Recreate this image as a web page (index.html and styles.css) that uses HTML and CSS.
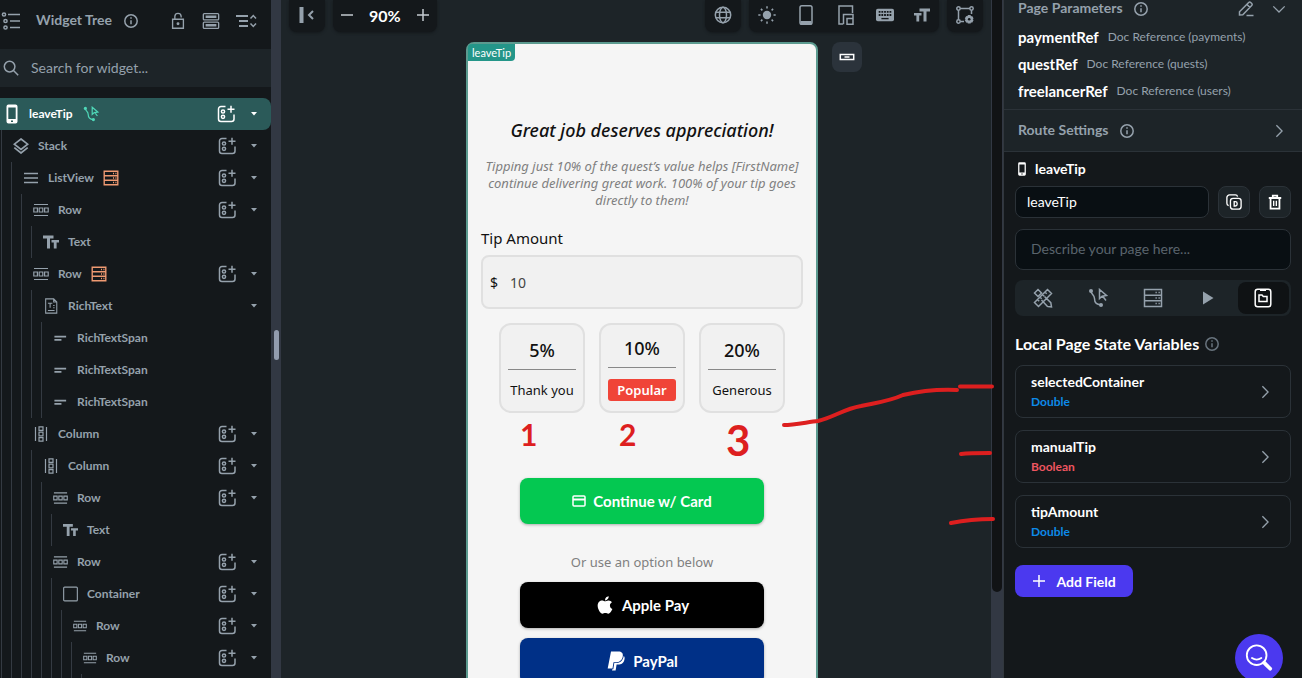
FILE: index.html
```
<!DOCTYPE html>
<html lang="en">
<head>
  <meta charset="UTF-8">
  <title>leaveTip - Widget Tree</title>
  <link rel="stylesheet" href="styles.css">
</head>
<body>
  <svg class="defs" aria-hidden="true">
    <symbol id="info" viewBox="0 0 16 16"><circle cx="8" cy="8" r="6.2"/><path d="M8 7.3v4M8 4.3v1.5"/></symbol>
    <symbol id="list" viewBox="0 0 20 20"><circle cx="3" cy="3.5" r="1.6"/><circle cx="4.5" cy="10" r="1.6"/><circle cx="4.5" cy="16.5" r="1.6"/><path d="M7 3.5h12M9 10h10M9 16.5h10"/></symbol>
    <symbol id="lock" viewBox="0 0 16 20"><path d="M2 8h12v10H2zM4.500 8V5a3.500 3.500 0 0 1 7 0v1"/><circle class="solid" cx="8" cy="13" r="1.600"/></symbol>
    <symbol id="panels" viewBox="0 0 20 20"><rect x="1.500" y="1.800" width="17" height="7" rx="1"/><rect x="1.500" y="11.200" width="17" height="7" rx="1"/><path class="thick" d="M4 5.300h12M4 14.700h12"/></symbol>
    <symbol id="collapse" viewBox="0 0 22 16"><path class="chev" d="M1 3h12M4 8h9M4 13h9"/><path d="M15.500 5.500 18.300 2.500l2.700 3M15.500 10.500l2.800 3 2.700-3"/></symbol>
    <symbol id="search" viewBox="0 0 16 16"><circle cx="6.600" cy="6.600" r="5.300"/><path d="m10.500 10.500 4.700 4.700"/></symbol>
    <symbol id="phone" viewBox="0 0 12 20"><path class="solid" fill-rule="evenodd" d="M2.500.5h7a2 2 0 0 1 2 2v15a2 2 0 0 1-2 2h-7a2 2 0 0 1-2-2v-15a2 2 0 0 1 2-2zM2.300 3.500v11.500h7.400V3.500zM5 16.600v1.400h2v-1.400z"/></symbol>
    <symbol id="action" viewBox="0 0 20 20"><circle class="solid" cx="3" cy="3" r="2"/><circle class="solid" cx="13" cy="17" r="2"/><path d="M3 3c0 3.500 3.500 3.500 3.500 7.500 0 5 2.500 6 6.500 6.500M11.500 1.500v9l2.600-2.300 4.400-.7zM14.500 8l3.500 4.500"/></symbol>
    <symbol id="db" viewBox="0 0 20 20"><path d="M1.500 1.500h17v17h-17zM1.500 7.200h17M1.500 12.800h17"/><path d="M12.500 4.400h1.300M15.500 4.400h1.300M12.500 10h1.300M15.500 10h1.300M12.500 15.600h1.300M15.500 15.600h1.300" /></symbol>
    <symbol id="add" viewBox="0 0 18 18"><path d="M8.500 1.500H4A2.500 2.500 0 0 0 1.500 4v10A2.500 2.500 0 0 0 4 16.500h10.500a2.500 2.500 0 0 0 2.500-2.500V9.500M14 .8v7M10.500 4.300h7"/><circle cx="6" cy="6.500" r="1.600"/><circle cx="6" cy="11.800" r="1.600"/></symbol>
    <symbol id="caret" viewBox="0 0 8 6"><path class="solid" d="M1 1h6L4 4.500z"/></symbol>
    <symbol id="stack" viewBox="0 0 16 16"><path class="mid" d="m8 1 6.700 5.200L8 11.400 1.300 6.200zM1.300 9.700 8 15l6.700-5.300"/></symbol>
    <symbol id="lines" viewBox="0 0 16 16"><path class="mid" d="M1 3.500h14M1 8h14M1 12.500h14"/></symbol>
    <symbol id="row" viewBox="0 0 16 16"><path d="M1 2.500h14M1 13.500h14M.8 6h3.600v4H.8zM6.200 6h3.600v4H6.200zM11.600 6h3.600v4h-3.600z"/></symbol>
    <symbol id="column" viewBox="0 0 16 16"><path d="M2.500 1v14M13.500 1v14M6 .8h4v3.600H6zM6 6.200h4v3.600H6zM6 11.600h4v3.600H6z"/></symbol>
    <symbol id="text" viewBox="0 0 16 16"><path class="solid" d="M0 1.500h10.500v3H7v10H4v-10H0zM8.500 6H16v2.600h-2.400v5.900h-2.800V8.600H8.500z"/></symbol>
    <symbol id="textsize" viewBox="0 0 16 16"><path class="solid" d="M5.500 1.500H16v3h-3.500v10h-3v-10h-4zM0 6h7.500v2.600H5.200v5.900H2.400V8.600H0z"/></symbol>
    <symbol id="doc" viewBox="0 0 16 18"><path d="M2 1h9l3.500 3.500V17H2zM4.500 6h5M7 6v5M10.500 8.500H12M10.500 11H12M4.500 14H12M11 1v3.500h3.500"/></symbol>
    <symbol id="span" viewBox="0 0 16 16"><path class="mid" d="M1.500 6.500H14M1.500 10H9"/></symbol>
    <symbol id="box" viewBox="0 0 16 16"><rect x=".7" y=".7" width="14.600" height="14.600" rx="1"/></symbol>
    <symbol id="right" viewBox="0 0 16 16"><path d="m5 1.500 6.500 6.500L5 14.500"/></symbol>
    <symbol id="down" viewBox="0 0 16 16"><path d="m1.500 5 6.500 6.500L14.500 5"/></symbol>
    <symbol id="plus" viewBox="0 0 14 14"><path d="M7 1v12M1 7h12"/></symbol>
    <symbol id="minus" viewBox="0 0 14 14"><path d="M1 7h12"/></symbol>
    <symbol id="back" viewBox="0 0 16 16"><path class="bar" d="M2.500 0v16"/><path class="chev" d="m14 4-4 4 4 4"/></symbol>
    <symbol id="globe" viewBox="0 0 18 18"><circle cx="9" cy="9" r="7.700"/><ellipse cx="9" cy="9" rx="3.500" ry="7.700"/><path d="M1.900 6.300h14.200M1.900 11.700h14.200"/></symbol>
    <symbol id="sun" viewBox="0 0 18 18"><circle class="solid" cx="9" cy="9" r="4.200"/><path d="M9 .3v2.200M9 15.500v2.200M.3 9h2.200M15.500 9h2.200M2.900 2.900l1.500 1.500M13.600 13.600l1.500 1.500M2.900 15.100l1.500-1.500M13.600 4.400l1.500-1.500"/></symbol>
    <symbol id="device" viewBox="0 0 14 20"><rect x="1" y=".8" width="12" height="18.400" rx="1.800"/><path class="thick" d="M1.500 17.500h11"/></symbol>
    <symbol id="responsive" viewBox="0 0 16 20"><path d="M5 19H1V1h13.500v7M5.500 19.200V9.500H15v9.700M9 13.500h6v5.700H9z"/></symbol>
    <symbol id="keyboard" viewBox="0 0 20 14"><rect class="solid" width="20" height="14" rx="2"/><path class="keys" d="M3 3.500h14M3 7h14"/><path class="keybar" d="M6 11h8"/></symbol>
    <symbol id="nodes" viewBox="0 0 18 18"><circle cx="2.500" cy="2.500" r="1.700"/><circle cx="15.500" cy="2.500" r="1.700"/><circle cx="2.500" cy="15.500" r="1.700"/><path d="M4.200 2.500h9.600M2.500 4.200v9.600M4.200 15.500H8M15.500 4.200V8"/><circle class="solid" cx="13.200" cy="13.300" r="3.600"/><path class="thick" d="M13.200 9v8.600M9.500 11.200l7.400 4.200M9.500 15.400l7.400-4.200"/><circle class="hole" cx="13.200" cy="13.300" r="1.300"/></symbol>
    <symbol id="hbar" viewBox="0 0 16 8"><path d="M1.300 1.500h13.400v5H1.300z"/><path d="M5.500 4h5"/></symbol>
    <symbol id="pencil" viewBox="0 0 16 16"><path d="M1.500 14v-3.300L10.700 1.500q1-1 2 0l1 1q1 1 0 2L4.800 13.800zM8.500 14.500h7M9 3.500l3 3"/></symbol>
    <symbol id="copy" viewBox="0 0 18 18"><rect x="5" y="5" width="12" height="12" rx="3"/><path d="M3 13a2.500 2.500 0 0 1-2-2.500V4a3 3 0 0 1 3-3h6.500A2.500 2.500 0 0 1 13 3M9.200 8.500v5h1.300a2 2 0 0 0 2-2v-1a2 2 0 0 0-2-2z"/></symbol>
    <symbol id="trash" viewBox="0 0 16 18"><path class="chev" d="M1 4.500h14M5.500 4V1.800h5V4M3 5v11.500h10V5"/><path d="M6.500 7.500v6M9.500 7.500v6"/></symbol>
    <symbol id="design" viewBox="0 0 20 20"><path d="m1.500 5 3.500-3.500L8.500 5 5 8.500zM14.500 18.500l4 .5-.7-4.300L11.500 8.500M8.500 12l6 6.500M14.500 1.500l4 4-13 13-4-4zM12 4l1.700 1.700M9.500 6.500l1.700 1.700M7 9l1.700 1.700M4.500 11.500l1.700 1.700"/></symbol>
    <symbol id="play" viewBox="0 0 12 14"><path class="solid" d="M1 .5v13L11.500 7z"/></symbol>
    <symbol id="state" viewBox="0 0 18 20"><rect x="1.200" y="1.200" width="15.600" height="17.600" rx="2.500"/><path class="chev" d="M6 2h6"/><path d="M5 7h3l1.300 1.500H13V13.500H5z"/></symbol>
    <symbol id="card" viewBox="0 0 14 12"><rect x="1" y="1" width="12" height="10" rx="1"/><path class="chev" d="M1 4.500h12"/></symbol>
    <symbol id="apple" viewBox="0 0 384 512"><path class="solid" d="M318.700 268.700c-.2-36.700 16.400-64.400 50-84.800-18.800-26.900-47.200-41.700-84.700-44.600-35.500-2.800-74.300 20.700-88.500 20.700-15 0-49.400-19.700-76.400-19.700C63.300 141.200 4 184.800 4 273.500q0 39.300 14.400 81.200c12.800 36.700 59 126.700 107.200 125.200 25.200-.6 43-17.900 75.800-17.900 31.800 0 48.300 17.900 76.400 17.900 48.600-.7 90.400-82.500 102.600-119.300-65.200-30.700-61.700-90-61.700-91.900zm-56.600-164.200c27.300-32.400 24.800-61.900 24-72.500-24.100 1.400-52 16.400-67.900 34.900-17.500 19.800-27.800 44.300-25.600 71.900 26.100 2 49.900-11.400 69.500-34.300z"/></symbol>
    <symbol id="paypal" viewBox="0 0 18 20"><path class="solid" d="M4 .5h7.500c3 0 4.800 1.600 4.300 4.700-.7 4.300-3.500 6-7 6H6.500l-1 6.300H.7z"/><path class="solid" d="M16.700 5c1.300 1 1 2.600.7 3.800-.8 3.500-3.200 4.800-6.200 4.800H9.600l-1 6H5l.3-1.300h1l1-6.300h2c4 0 6.600-2.300 7.400-7z"/></symbol>
  </svg>

  <div class="app">
    <aside class="left">
      <header class="left-head">
        <svg class="i20"><use href="#list"/></svg>
        <h2>Widget Tree</h2>
        <svg class="i16"><use href="#info"/></svg>
        <div class="head-tools">
          <button aria-label="Lock"><svg class="i18"><use href="#lock"/></svg></button>
          <button aria-label="Panels"><svg class="i18"><use href="#panels"/></svg></button>
          <button aria-label="Collapse"><svg class="i22"><use href="#collapse"/></svg></button>
        </div>
      </header>
      <label class="search">
        <svg class="i16"><use href="#search"/></svg>
        <input type="text" placeholder="Search for widget..." aria-label="Search for widget">
      </label>

      <div class="tree">
        <div class="node selected"><svg class="tall"><use href="#phone"/></svg><span>leaveTip</span><svg class="i16 teal"><use href="#action"/></svg><button class="add" aria-label="Add"><svg><use href="#add"/></svg></button><button class="caret" aria-label="Toggle"><svg><use href="#caret"/></svg></button></div>
        <ul>
          <li>
            <div class="node"><svg class="type"><use href="#stack"/></svg><span>Stack</span><button class="add" aria-label="Add"><svg><use href="#add"/></svg></button><button class="caret" aria-label="Toggle"><svg><use href="#caret"/></svg></button></div>
            <ul>
              <li>
                <div class="node"><svg class="type"><use href="#lines"/></svg><span>ListView</span><svg class="i16 orange"><use href="#db"/></svg><button class="add" aria-label="Add"><svg><use href="#add"/></svg></button><button class="caret" aria-label="Toggle"><svg><use href="#caret"/></svg></button></div>
                <ul>
                  <li>
                    <div class="node"><svg class="type"><use href="#row"/></svg><span>Row</span><button class="add" aria-label="Add"><svg><use href="#add"/></svg></button><button class="caret" aria-label="Toggle"><svg><use href="#caret"/></svg></button></div>
                    <ul>
                      <li><div class="node"><svg class="type"><use href="#text"/></svg><span>Text</span></div></li>
                    </ul>
                  </li>
                  <li>
                    <div class="node"><svg class="type"><use href="#row"/></svg><span>Row</span><svg class="i16 orange"><use href="#db"/></svg><button class="add" aria-label="Add"><svg><use href="#add"/></svg></button><button class="caret" aria-label="Toggle"><svg><use href="#caret"/></svg></button></div>
                    <ul>
                      <li>
                        <div class="node"><svg class="type"><use href="#doc"/></svg><span>RichText</span><button class="caret" aria-label="Toggle"><svg><use href="#caret"/></svg></button></div>
                        <ul>
                          <li><div class="node"><svg class="type"><use href="#span"/></svg><span>RichTextSpan</span></div></li>
                          <li><div class="node"><svg class="type"><use href="#span"/></svg><span>RichTextSpan</span></div></li>
                          <li><div class="node"><svg class="type"><use href="#span"/></svg><span>RichTextSpan</span></div></li>
                        </ul>
                      </li>
                    </ul>
                  </li>
                  <li>
                    <div class="node"><svg class="type"><use href="#column"/></svg><span>Column</span><button class="add" aria-label="Add"><svg><use href="#add"/></svg></button><button class="caret" aria-label="Toggle"><svg><use href="#caret"/></svg></button></div>
                    <ul>
                      <li>
                        <div class="node"><svg class="type"><use href="#column"/></svg><span>Column</span><button class="add" aria-label="Add"><svg><use href="#add"/></svg></button><button class="caret" aria-label="Toggle"><svg><use href="#caret"/></svg></button></div>
                        <ul>
                          <li>
                            <div class="node"><svg class="type"><use href="#row"/></svg><span>Row</span><button class="add" aria-label="Add"><svg><use href="#add"/></svg></button><button class="caret" aria-label="Toggle"><svg><use href="#caret"/></svg></button></div>
                            <ul>
                              <li><div class="node"><svg class="type"><use href="#text"/></svg><span>Text</span></div></li>
                            </ul>
                          </li>
                          <li>
                            <div class="node"><svg class="type"><use href="#row"/></svg><span>Row</span><button class="add" aria-label="Add"><svg><use href="#add"/></svg></button><button class="caret" aria-label="Toggle"><svg><use href="#caret"/></svg></button></div>
                            <ul>
                              <li>
                                <div class="node"><svg class="type"><use href="#box"/></svg><span>Container</span><button class="add" aria-label="Add"><svg><use href="#add"/></svg></button><button class="caret" aria-label="Toggle"><svg><use href="#caret"/></svg></button></div>
                                <ul>
                                  <li>
                                    <div class="node"><svg class="type"><use href="#row"/></svg><span>Row</span><button class="add" aria-label="Add"><svg><use href="#add"/></svg></button><button class="caret" aria-label="Toggle"><svg><use href="#caret"/></svg></button></div>
                                    <ul>
                                      <li>
                                        <div class="node"><svg class="type"><use href="#row"/></svg><span>Row</span><button class="add" aria-label="Add"><svg><use href="#add"/></svg></button><button class="caret" aria-label="Toggle"><svg><use href="#caret"/></svg></button></div>
                                        <ul><li><div class="node"></div></li></ul>
                                      </li>
                                    </ul>
                                  </li>
                                </ul>
                              </li>
                            </ul>
                          </li>
                        </ul>
                      </li>
                    </ul>
                  </li>
                </ul>
              </li>
            </ul>
          </li>
        </ul>
      </div>
    </aside>
    <div class="splitter"><span></span></div>

    <main class="canvas">
      <div class="toolbar">
        <div class="group"><button aria-label="Hide panel"><svg class="i16"><use href="#back"/></svg></button></div>
        <div class="group zoom">
          <button aria-label="Zoom out"><svg class="i14"><use href="#minus"/></svg></button>
          <strong>90%</strong>
          <button aria-label="Zoom in"><svg class="i14"><use href="#plus"/></svg></button>
        </div>
        <div class="group push"><button aria-label="Language"><svg class="i18"><use href="#globe"/></svg></button></div>
        <div class="group tools">
          <button aria-label="Theme"><svg class="i18"><use href="#sun"/></svg></button>
          <button aria-label="Device"><svg class="i20"><use href="#device"/></svg></button>
          <button aria-label="Responsive"><svg class="i20"><use href="#responsive"/></svg></button>
          <button aria-label="Keyboard"><svg class="i18"><use href="#keyboard"/></svg></button>
          <button aria-label="Text size"><svg class="i16"><use href="#textsize"/></svg></button>
        </div>
        <div class="group"><button aria-label="Settings"><svg class="i18"><use href="#nodes"/></svg></button></div>
      </div>

      <div class="stage">
        <div class="phone">
          <span class="tag">leaveTip</span>
          <h1>Great job deserves appreciation!</h1>
          <p class="intro">Tipping just 10% of the quest’s value helps [FirstName] continue delivering great work. 100% of your tip goes directly to them!</p>
          <label class="tip-label" for="tip">Tip Amount</label>
          <div class="tip-field"><span>$</span><input id="tip" type="text" value="10"></div>
          <div class="options">
            <button><strong>5%</strong><span>Thank you</span></button>
            <button><strong>10%</strong><span class="popular">Popular</span></button>
            <button><strong>20%</strong><span>Generous</span></button>
          </div>
          <button class="pay green"><svg class="i14"><use href="#card"/></svg>Continue w/ Card</button>
          <p class="or">Or use an option below</p>
          <button class="pay black"><svg class="i20"><use href="#apple"/></svg>Apple Pay</button>
          <button class="pay blue"><svg class="i20"><use href="#paypal"/></svg>PayPal</button>
          <span class="mark one">1</span>
          <span class="mark two">2</span>
          <span class="mark three">3</span>
        </div>
        <button class="side" aria-label="Orientation"><svg class="i16"><use href="#hbar"/></svg></button>
      </div>

      <svg class="strokes" viewBox="0 0 220 150" aria-hidden="true">
        <path d="M8 45C18 45 32 42 42 41C58 37 68 29 85 26C104 22 114 21 127 15C144 11 158 9 181 10M184 6.500H216M185 74C193 73 200 73 214 73M175 143C190 140 198 139 217 139"/>
      </svg>
    </main>
    <div class="scrollbar"><span></span></div>

    <aside class="right">
      <section class="params">
        <div class="line"><h2>Page Parameters</h2><svg class="i16"><use href="#info"/></svg><button class="push" aria-label="Edit"><svg class="i16"><use href="#pencil"/></svg></button><button aria-label="Collapse"><svg class="i14"><use href="#down"/></svg></button></div>
        <dl>
          <div><dt>paymentRef</dt><dd>Doc Reference (payments)</dd></div>
          <div><dt>questRef</dt><dd>Doc Reference (quests)</dd></div>
          <div><dt>freelancerRef</dt><dd>Doc Reference (users)</dd></div>
        </dl>
      </section>
      <section class="route">
        <div class="line"><h2>Route Settings</h2><svg class="i16"><use href="#info"/></svg><button class="push" aria-label="Open"><svg class="i14"><use href="#right"/></svg></button></div>
      </section>

      <section class="props">
        <div class="title"><svg class="i14"><use href="#phone"/></svg><h3>leaveTip</h3></div>
        <div class="name">
          <input type="text" value="leaveTip" aria-label="Page name">
          <button aria-label="Duplicate"><svg class="i16"><use href="#copy"/></svg></button>
          <button aria-label="Delete"><svg class="i16"><use href="#trash"/></svg></button>
        </div>
        <textarea rows="1" placeholder="Describe your page here..." aria-label="Description"></textarea>
        <nav class="tabs">
          <button aria-label="Design"><svg class="i20"><use href="#design"/></svg></button>
          <button aria-label="Actions"><svg class="i20"><use href="#action"/></svg></button>
          <button aria-label="Backend"><svg class="i20"><use href="#db"/></svg></button>
          <button aria-label="Preview"><svg class="i14"><use href="#play"/></svg></button>
          <button class="active" aria-label="State"><svg class="i20"><use href="#state"/></svg></button>
        </nav>
        <div class="vars-head"><h3>Local Page State Variables</h3><svg class="i16"><use href="#info"/></svg></div>
        <div class="vars">
          <button><span><b>selectedContainer</b><em>Double</em></span><svg class="i14"><use href="#right"/></svg></button>
          <button><span><b>manualTip</b><em class="bool">Boolean</em></span><svg class="i14"><use href="#right"/></svg></button>
          <button><span><b>tipAmount</b><em>Double</em></span><svg class="i14"><use href="#right"/></svg></button>
        </div>
        <button class="add-field"><svg class="i14"><use href="#plus"/></svg>Add Field</button>
      </section>
    </aside>

    <button class="help" aria-label="Help">
      <svg viewBox="0 0 32 32"><circle cx="13.500" cy="13" r="10.500"/><path d="M8.500 16q5 3.500 10 0"/><path class="handle" d="m21.500 21 2 2 4.500 4.500"/></svg>
    </button>
  </div>
</body>
</html>
```

FILE: styles.css
```
* {
  box-sizing: border-box;
}
body {
  margin: 0;
  background: #14181b;
  color: #fff;
  font-family: Lato, "Liberation Sans", sans-serif;
  font-size: 14px;
}
button {
  font: inherit;
  color: inherit;
  background: none;
  border: 0;
  padding: 0;
  display: flex;
  align-items: center;
  justify-content: center;
  cursor: pointer;
}
input, textarea {
  font: inherit;
  color: inherit;
  background: none;
  border: 0;
  outline: 0;
  padding: 0;
  min-width: 0;
}
h1, h2, h3, p, ul, dl, dd {
  margin: 0;
  padding: 0;
}
ul {
  list-style: none;
}

/* icons */
svg {
  fill: none;
  stroke: currentColor;
  stroke-width: 1.5;
  flex: none;
  display: block;
}
.defs {
  position: absolute;
  width: 0;
  height: 0;
}
.solid {
  fill: currentColor;
  stroke: none;
}
.thick {
  stroke-width: 3;
}
.mid {
  stroke-width: 1.7;
}
.bar {
  stroke-width: 4;
}
.chev {
  stroke-width: 2;
}
.keys {
  stroke: #14181b;
  stroke-width: 2;
  stroke-dasharray: 2 1;
}
.keybar {
  stroke: #14181b;
}
.hole {
  fill: #14181b;
  stroke: none;
}
.i14 { width: 14px; height: 14px; }
.i16 { width: 16px; height: 16px; }
.i18 { width: 18px; height: 18px; }
.i20 { width: 20px; height: 20px; }
.i22 { width: 22px; height: 16px; }
.teal { color: #4fd8b8; }
.orange { color: #f09a72; }
.push { margin-left: auto; }

.app {
  display: flex;
  height: 100vh;
  overflow: hidden;
}

/* widget tree */
.left {
  width: 271px;
  flex: none;
  color: #95a1ac;
  overflow: hidden;
}
.left-head {
  display: flex;
  align-items: center;
  height: 49px;
  padding: 0 14px 8px 1px;
}
.left-head h2 {
  margin: 0 11px 0 15px;
}
h2 {
  padding-bottom: 2px;
  font-size: 14px;
  font-weight: 700;
  line-height: 20px;
}
.head-tools {
  display: flex;
  gap: 15px;
  margin-left: auto;
}
.search {
  display: flex;
  align-items: center;
  gap: 12px;
  height: 38px;
  padding: 0 3px;
  background: #1d2428;
}
.search input {
  flex: 1;
  padding-bottom: 2px;
}
::placeholder {
  color: #95a1ac;
  opacity: 1;
}
.tree {
  margin-top: 11px;
  font-size: 12px;
  font-weight: 700;
}
.tree ul {
  margin-left: 9px;
  border-left: 1px solid #343a42;
}
.tree > ul {
  margin-left: 1px;
}
.node {
  display: flex;
  align-items: center;
  gap: 9px;
  height: 32px;
  padding: 0 12px 0 11px;
}
.node span {
  padding-bottom: 2px;
}
.node .type {
  width: 16px;
  height: 16px;
  stroke-width: 1.2;
}
/* deep levels use slightly smaller icons */
.tree ul ul ul ul ul .type {
  width: 15px;
}
.tree ul ul ul ul ul ul ul .type {
  width: 14px;
}
.node.selected {
  padding-left: 5px;
  gap: 10px;
  color: #fff;
  background: #2b5a59;
  border-radius: 0 8px 8px 0;
}
.node .tall {
  width: 14px;
  height: 20px;
}
.node .orange {
  stroke-width: 1.7;
}
.node .add {
  margin-left: auto;
}
.node .add svg {
  width: 18px;
  height: 18px;
}
.node .caret {
  width: 10px;
  margin-left: 4px;
}
.node span ~ .caret:nth-child(3) {
  margin-left: auto;
}
.caret svg {
  width: 8px;
  height: 6px;
}
.splitter {
  display: flex;
  align-items: center;
  justify-content: center;
  width: 10px;
  padding-top: 12px;
  flex: none;
  background: #323843;
}
.splitter span {
  width: 5px;
  height: 30px;
  border-radius: 3px;
  background: #929cae;
}

/* canvas */
.canvas {
  position: relative;
  flex: 1;
  background: #1d2428;
}
.toolbar {
  display: flex;
  gap: 8px;
  padding: 0 8px;
  color: #95a1ac;
}
.group {
  display: flex;
  align-items: center;
  justify-content: center;
  min-width: 36px;
  height: 32px;
  padding-bottom: 2px;
  border-radius: 0 0 8px 8px;
  background: #14181b;
  box-shadow: 0 1px 3px #14181b;
}
.zoom {
  gap: 15px;
  padding: 0 7px 2px;
  color: #fff;
  font-size: 16px;
}
.zoom button {
  color: #c3cad1;
}
.tools {
  gap: 20px;
  padding: 0 9px 2px;
}
.stage {
  display: flex;
  justify-content: center;
  align-items: flex-start;
  gap: 14px;
  padding: 10px 0 0 56px;
}
.phone {
  position: relative;
  display: flex;
  flex-direction: column;
  width: 352px;
  min-height: 100vh;
  padding: 74px 13px 0;
  border: 2px solid #5b9a8f;
  border-radius: 8px;
  background: #f5f5f5;
  color: #111;
  font-family: "Noto Sans", "Open Sans", sans-serif;
}
.tag {
  position: absolute;
  top: 0;
  left: 0;
  padding: 0 4px;
  border-radius: 4px 0 4px 0;
  background: #249689;
  color: #fff;
  font: 11px/17px Lato, sans-serif;
}
.phone h1 {
  font-size: 18px;
  font-weight: 500;
  font-style: italic;
  line-height: 24px;
  text-align: center;
  white-space: nowrap;
}
.intro {
  margin: 16px 0 20px;
  color: #808080;
  font-size: 13px;
  font-style: italic;
  line-height: 17px;
  text-align: center;
}
.tip-label {
  margin-bottom: 8px;
  font-size: 15px;
  line-height: 18px;
}
.tip-field {
  display: flex;
  align-items: center;
  gap: 12px;
  height: 54px;
  padding: 0 7px;
  border: 2px solid #e0e0e0;
  border-radius: 8px;
  background: #f1f1f1;
  font-size: 14px;
}
.tip-field input {
  flex: 1;
  color: #444;
}
.options {
  display: flex;
  justify-content: center;
  gap: 14px;
  margin: 14px 0 65px;
}
.options button {
  flex-direction: column;
  width: 86px;
  height: 90px;
  padding: 0 7px;
  border: 2px solid #e0e0e0;
  border-radius: 12px;
  background: #f1f1f1;
}
.options strong {
  width: 100%;
  margin-bottom: 11px;
  padding-bottom: 7px;
  border-bottom: 1px solid #888;
  font-size: 18px;
  font-weight: 500;
  line-height: 24px;
}
.options span {
  font-size: 13px;
  line-height: 18px;
  white-space: nowrap;
}
.options .popular {
  width: 100%;
  padding: 2px 0;
  border-radius: 3px;
  background: #f04438;
  color: #fff;
  font-weight: 600;
}
.pay {
  align-self: center;
  gap: 7px;
  width: 244px;
  height: 46px;
  flex: none;
  border-radius: 8px;
  color: #fff;
  font-family: Lato, sans-serif;
  font-size: 15px;
  font-weight: 700;
  box-shadow: 0 1px 3px rgba(0,0,0,0.3);
}
.green { background: #04c851; }
.black { background: #000; margin-bottom: 10px; }
.blue { background: #003087; }
.or {
  margin: 29px 0 11px;
  color: #808080;
  font-size: 13px;
  line-height: 18px;
  text-align: center;
}
.side {
  width: 30px;
  height: 30px;
  border-radius: 8px;
  background: #2b333b;
}

/* red pen notes */
.mark {
  position: absolute;
  color: #dd1f1f;
  font: 700 30px/30px Lato, sans-serif;
}
.one { left: 52px; top: 375px; }
.two { left: 151px; top: 375px; }
.three {
  left: 258px;
  top: 375px;
  font-size: 42px;
  line-height: 42px;
}
.strokes {
  position: absolute;
  top: 380px;
  right: -5px;
  width: 220px;
  height: 150px;
  z-index: 1;
  stroke: #dd1f1f;
  stroke-width: 4;
  stroke-linecap: round;
  pointer-events: none;
}
.scrollbar {
  width: 12px;
  flex: none;
  padding: 0 1px;
  background: #323843;
}
.scrollbar span {
  display: block;
  height: 592px;
  border-radius: 0 0 5px 5px;
  background: #111315;
}

/* properties */
.right {
  width: 299px;
  flex: none;
  border-left: 1px solid #31373d;
}
.params, .route {
  padding: 0 16px 0 14px;
  background: #1d2428;
  border-bottom: 1px solid #2b3238;
  color: #95a1ac;
}
.params {
  padding-bottom: 5px;
}
.line {
  display: flex;
  align-items: center;
  gap: 10px;
}
.params .line {
  height: 23px;
  padding-bottom: 5px;
}
.line button + button {
  margin-left: 8px;
}
.route .line {
  height: 41px;
}
dl div {
  display: flex;
  align-items: center;
  gap: 9px;
  height: 27px;
}
dt {
  color: #fff;
  font-size: 15px;
  font-weight: 700;
}
dd {
  font-size: 12px;
}
.props {
  padding: 6px 11px 0;
}
.title {
  display: flex;
  align-items: center;
  gap: 6px;
  height: 22px;
}
h3 {
  font-size: 14px;
  line-height: 22px;
}
.name {
  display: flex;
  gap: 9px;
  margin: 6px 0 11px;
}
.name input, .props textarea {
  padding: 0 11px 2px;
  border: 1px solid #2b3238;
  border-radius: 8px;
  background: #090f13;
}
.name input {
  flex: 1;
  height: 32px;
}
.name button {
  width: 32px;
  height: 32px;
  border: 1px solid #2b3238;
  border-radius: 8px;
  background: #1d2428;
}
.props textarea {
  display: block;
  width: 100%;
  height: 41px;
  padding: 9px 15px;
  line-height: 20px;
  resize: none;
}
.props textarea::placeholder {
  color: #5a646d;
}
.tabs {
  display: flex;
  height: 36px;
  margin: 10px 0 17px;
  border-radius: 8px;
  background: #1d2428;
  color: #95a1ac;
}
.tabs button {
  flex: 0 0 20%;
}
.tabs .active {
  flex-basis: calc(20% - 4px);
  margin: 2px;
  border-radius: 8px;
  background: #0f1214;
  color: #fff;
}
.vars-head {
  display: flex;
  align-items: center;
  gap: 5px;
  color: #68737d;
}
.vars-head h3 {
  color: #fff;
  font-size: 16px;
}
.vars {
  display: flex;
  flex-direction: column;
  gap: 12px;
  margin: 10px 0 17px;
}
.vars button {
  justify-content: space-between;
  width: 100%;
  height: 53px;
  padding: 0 18px 0 15px;
  border: 1px solid #2b3238;
  border-radius: 8px;
  text-align: left;
}
.vars svg {
  color: #95a1ac;
}
.vars b, .vars em {
  display: block;
  line-height: 20px;
}
.vars em {
  color: #0d8ae8;
  font-size: 12px;
  font-style: normal;
  font-weight: 700;
}
.vars .bool {
  color: #ee5560;
}
.add-field {
  gap: 10px;
  width: 118px;
  height: 32px;
  border-radius: 8px;
  background: #4b39ef;
  font-weight: 700;
}
.help {
  position: fixed;
  right: 19px;
  bottom: -4px;
  width: 48px;
  height: 48px;
  border-radius: 50%;
  background: #4b39ef;
}
.help svg {
  width: 30px;
  height: 30px;
  stroke-width: 2;
  stroke-linecap: round;
}
.help .handle {
  stroke-width: 4;
}
```
